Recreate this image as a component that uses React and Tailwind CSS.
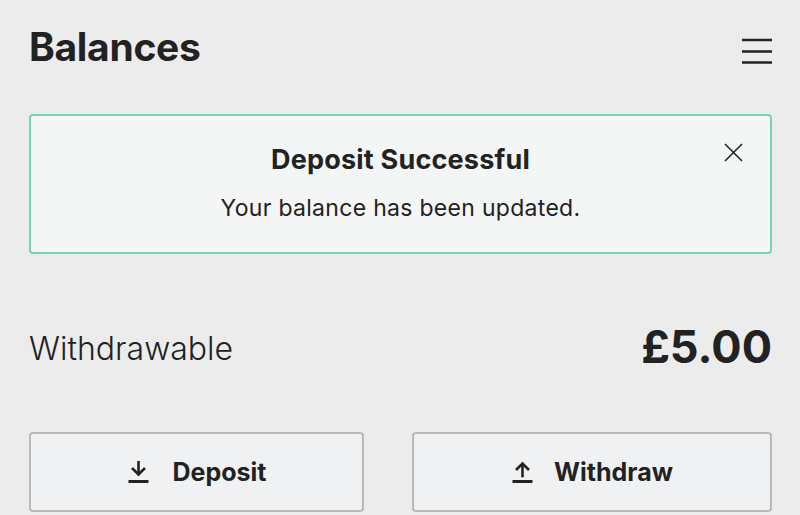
import { useState } from 'react';

function MenuIcon() {
    return (
        <svg width="30" height="26" viewBox="0 0 30 26" fill="none" stroke="#222" strokeWidth="2.5">
            <line x1="0" y1="2" x2="30" y2="2" />
            <line x1="0" y1="13.5" x2="30" y2="13.5" />
            <line x1="0" y1="24.5" x2="30" y2="24.5" />
        </svg>
    );
}

function CloseIcon() {
    return (
        <svg width="19" height="19" viewBox="0 0 19 19" fill="none" stroke="#222" strokeWidth="1.6">
            <line x1="1" y1="1" x2="18" y2="18" />
            <line x1="18" y1="1" x2="1" y2="18" />
        </svg>
    );
}

// 下向き / 上向きの矢印アイコン
function ArrowIcon({ up }) {
    return (
        <svg width="23" height="22" viewBox="0 0 23 22" fill="none" stroke="#222" strokeWidth="2.6" strokeLinecap="square">
            {up ? (
                <>
                    <line x1="11.5" y1="3" x2="11.5" y2="15" />
                    <polyline points="5,9 11.5,2.5 18,9" strokeLinecap="butt" />
                </>
            ) : (
                <>
                    <line x1="11.5" y1="1" x2="11.5" y2="13" />
                    <polyline points="5,7 11.5,13.5 18,7" strokeLinecap="butt" />
                </>
            )}
            <line x1="1.5" y1="20.5" x2="21.5" y2="20.5" strokeWidth="3" strokeLinecap="butt" />
        </svg>
    );
}

export default function App() {
    const [showAlert, setShowAlert] = useState(true);

    return (
        <div
            className="min-h-screen bg-[#ebeceb] text-[#222] pl-[29px] pr-[28px] overflow-hidden"
            style={{ fontFamily: 'Inter, "Noto Sans", sans-serif' }}
        >
            {/* ヘッダー */}
            <div className="flex items-start justify-between pt-[27px]">
                <h1 className="text-[39px] leading-none font-bold tracking-[-0.3px]">Balances</h1>
                <button className="mt-[11px]">
                    <MenuIcon />
                </button>
            </div>

            {/* 通知 */}
            {showAlert && (
                <div className="relative mt-[48px] h-[140px] rounded-[4px] border-2 border-[#72d6b2] bg-[#f4f5f5] flex flex-col items-center pt-[30px]">
                    <div className="text-[27px] leading-none font-bold tracking-[0.2px]">Deposit Successful</div>
                    <div className="mt-[24px] text-[23px] leading-none tracking-[0.3px]">Your balance has been updated.</div>
                    <button
                        onClick={() => setShowAlert(false)}
                        className="absolute right-[27px] top-[27px]"
                    >
                        <CloseIcon />
                    </button>
                </div>
            )}

            {/* 残高 */}
            <div className="flex items-center justify-between mt-[70px]">
                <span className="text-[32px] leading-none font-light pt-[4px]">Withdrawable</span>
                <span className="text-[45px] leading-none font-bold">£5.00</span>
            </div>

            {/* ボタン */}
            <div className="flex justify-between mt-[63px]">
                <button className="w-[335px] h-[80px] rounded-[4px] border-2 border-[#b9b9b9] bg-[#f0f1f2] flex items-center justify-center gap-[23px]">
                    <ArrowIcon />
                    <span className="text-[25px] leading-none font-bold">Deposit</span>
                </button>
                <button className="w-[360px] h-[80px] rounded-[4px] border-2 border-[#b9b9b9] bg-[#f0f1f2] flex items-center justify-center gap-[20px]">
                    <ArrowIcon up />
                    <span className="text-[25px] leading-none font-bold">Withdraw</span>
                </button>
            </div>
        </div>
    );
}
